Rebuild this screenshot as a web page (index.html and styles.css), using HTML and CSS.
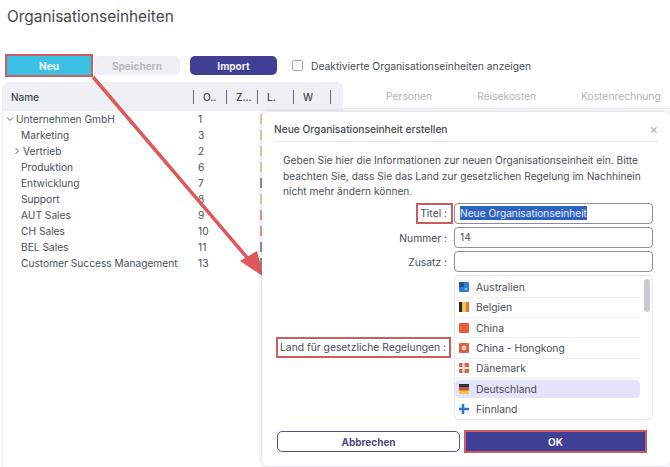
FILE: index.html
```html
<!DOCTYPE html>
<html lang="de">
<head>
<meta charset="utf-8">
<title>Organisationseinheiten</title>
<link rel="stylesheet" href="styles.css">
</head>
<body>
<div class="page">
  <h1 class="title">Organisationseinheiten</h1>
  <div class="toolbar">
    <button class="btn btn-new">Neu</button>
    <button class="btn btn-save">Speichern</button>
    <span class="sep"></span>
    <button class="btn btn-import">Import</button>
    <label class="check"><span class="box"></span>Deaktivierte Organisationseinheiten anzeigen</label>
  </div>
  <div class="main">
    <div class="table">
      <div class="thead">
        <span class="th th-name">Name</span>
        <span class="th th-o">O..</span>
        <span class="th th-z">Z...</span>
        <span class="th th-l">L.</span>
        <span class="th th-w">W</span>
        <span class="th th-x"></span>
      </div>
      <div class="tbody">
        <div class="row"><span class="name lvl0"><svg class="chev" viewBox="0 0 8 8"><path d="M1 2.5 4 5.5 7 2.5"/></svg>Unternehmen GmbH</span><span class="num">1</span><span class="cut cut-a"></span></div>
        <div class="row"><span class="name lvl1">Marketing</span><span class="num">3</span><span class="cut cut-a"></span></div>
        <div class="row"><span class="name lvl2"><svg class="chev" viewBox="0 0 8 8"><path d="M2.5 1 5.5 4 2.5 7"/></svg>Vertrieb</span><span class="num">2</span><span class="cut cut-a"></span></div>
        <div class="row"><span class="name lvl1">Produktion</span><span class="num">6</span><span class="cut cut-a"></span></div>
        <div class="row"><span class="name lvl1">Entwicklung</span><span class="num">7</span><span class="cut cut-b"></span></div>
        <div class="row"><span class="name lvl1">Support</span><span class="num">8</span><span class="cut cut-a"></span></div>
        <div class="row"><span class="name lvl1">AUT Sales</span><span class="num">9</span><span class="cut cut-c"></span></div>
        <div class="row"><span class="name lvl1">CH Sales</span><span class="num">10</span><span class="cut cut-c"></span></div>
        <div class="row"><span class="name lvl1">BEL Sales</span><span class="num">11</span><span class="cut cut-b"></span></div>
        <div class="row"><span class="name lvl1">Customer Success Management</span><span class="num">13</span><span class="cut cut-b"></span></div>
      </div>
    </div>
    <div class="tabs">
      <span>Personen</span><span>Reisekosten</span><span>Kostenrechnung</span>
    </div>
  </div>

  <svg class="arrow" viewBox="0 0 670 467" width="670" height="467">
    <path class="arrow-line" d="M93 77 250 261"/>
    <path class="arrow-head" d="M264 277 240 261 257 251Z"/>
  </svg>

  <div class="dialog">
    <div class="dlg-head"><span>Neue Organisationseinheit erstellen</span><span class="close">×</span></div>
    <p class="intro">Geben Sie hier die Informationen zur neuen Organisationseinheit ein. Bitte beachten Sie, dass Sie das Land zur gesetzlichen Regelung im Nachhinein nicht mehr ändern können.</p>
    <div class="form">
      <div class="field"><span class="lab mark mark-title">Titel :</span><div class="input"><span class="sel">Neue Organisationseinheit</span></div></div>
      <div class="field"><span class="lab">Nummer :</span><div class="input">14</div></div>
      <div class="field"><span class="lab">Zusatz :</span><div class="input"></div></div>
      <div class="field field-list">
        <span class="lab mark">Land für gesetzliche Regelungen :</span>
        <div class="list">
          <div class="scroll"></div>
          <div class="opt"><svg class="flag" viewBox="0 0 10 10"><rect width="10" height="10" rx="1" fill="#2f7fd0"/><rect width="5" height="5" fill="#24508f"/><circle cx="7" cy="7" r="1" fill="#cfe2f5"/></svg>Australien</div>
          <div class="opt"><svg class="flag" viewBox="0 0 10 10"><rect width="3.4" height="10" fill="#2b2b2b"/><rect x="3.4" width="3.3" height="10" fill="#f3cf3f"/><rect x="6.7" width="3.3" height="10" fill="#e2763f"/></svg>Belgien</div>
          <div class="opt"><svg class="flag" viewBox="0 0 10 10"><rect width="10" height="10" rx="1" fill="#ee5b35"/></svg>China</div>
          <div class="opt"><svg class="flag" viewBox="0 0 10 10"><rect width="10" height="10" rx="1" fill="#e0603f"/><circle cx="5" cy="5" r="2.4" fill="#f6c9b8"/></svg>China - Hongkong</div>
          <div class="opt"><svg class="flag" viewBox="0 0 10 10"><rect width="10" height="10" rx="1" fill="#d9634a"/><rect x="3.6" width="2" height="10" fill="#f5ece8"/><rect y="4" width="10" height="2" fill="#f5ece8"/></svg>Dänemark</div>
          <div class="opt opt-on"><svg class="flag" viewBox="0 0 10 10"><rect width="10" height="3.6" fill="#333"/><rect y="3.6" width="10" height="3.2" fill="#d0553a"/><rect y="6.8" width="10" height="3.2" fill="#f2c53c"/></svg>Deutschland</div>
          <div class="opt"><svg class="flag" viewBox="0 0 10 10"><rect width="10" height="10" fill="#f3f6fa"/><rect x="2.8" width="2.4" height="10" fill="#2b7cc4"/><rect y="3.8" width="10" height="2.4" fill="#2b7cc4"/></svg>Finnland</div>
        </div>
      </div>
    </div>
    <div class="actions">
      <button class="btn btn-cancel">Abbrechen</button>
      <button class="btn btn-ok">OK</button>
    </div>
  </div>
</div>
</body>
</html>
```
FILE: styles.css
```css
* { box-sizing: border-box; }
html, body { margin: 0; padding: 0; }
body { width: 670px; height: 467px; overflow: hidden; background: #fff; font-family: Inter, "Liberation Sans", sans-serif; color: #44474d; }
.page { position: relative; width: 670px; height: 467px; overflow: hidden; }
.title { margin: 0; padding: 7px 0 0 7px; height: 54px; font-size: 15.4px; line-height: 20px; font-weight: 400; color: #45484d; }
.toolbar { display: flex; align-items: center; height: 23px; padding-left: 5px; }
.btn { border: 0; font-family: inherit; font-size: 10px; font-weight: 700; padding: 0; }
.btn-new { width: 88px; height: 23px; background: #3cc0e4; color: #f4fbfe; outline: 2px solid #cf5b5e; outline-offset: -2px; }
.btn-save { width: 86px; height: 19px; margin-left: 1px; background: #eef0f5; color: #b5b8c0; border-radius: 5px; }
.sep { width: 1px; height: 19px; margin: 0 4px 0 5px; background: #eceef2; }
.btn-import { width: 87px; height: 19px; background: #3f3f94; color: #f1f1fa; border-radius: 5px; }
.check { display: flex; align-items: center; margin-left: 15px; font-size: 10.3px; color: #4a4d53; }
.box { width: 11px; height: 11px; margin-right: 8px; border: 1px solid #a9acb3; border-radius: 2px; background: #fff; }
.main { display: flex; margin-top: 5px; }
.table { width: 341px; height: 385px; margin-left: 2px; flex: none; border-left: 1px solid #eceef2; border-radius: 6px 6px 0 0; }
.thead { display: flex; align-items: center; height: 29px; padding-top: 1px; background: #eef0f4; border-radius: 6px 6px 0 0; font-size: 10px; font-weight: 500; color: #43464c; }
.th { height: 14px; line-height: 14px; border-left: 1px solid #666a72; padding-left: 9px; white-space: nowrap; }
.th-name { width: 190px; border-left: 0; padding-left: 8px; }
.th-o { width: 33px; }
.th-z { width: 31px; padding-left: 9px; }
.th-l { width: 36px; padding-left: 9px; }
.th-w { width: 37px; }
.th-x { flex: 1; }
.tbody { font-size: 10.2px; color: #4b4e54; }
.row { display: flex; align-items: center; height: 16px; line-height: 16px; }
.name { width: 195px; display: flex; align-items: center; white-space: nowrap; }
.num { width: 62px; }
.cut { width: 2px; height: 10px; }
.cut-a { background: #e8d3b8; }
.cut-b { background: #8d9098; }
.cut-c { background: #d9a08c; }
.lvl0 { padding-left: 3px; }
.lvl1 { padding-left: 18px; }
.lvl2 { padding-left: 10px; }
.chev { width: 8px; height: 8px; margin-right: 2px; flex: none; fill: none; stroke: #55585e; stroke-width: 1; }
.tabs { display: flex; flex: 1; padding: 8px 0 0 43px; height: 27px; border-bottom: 1px solid #eceef2; font-size: 10.3px; line-height: 12px; color: #b0b3b9; gap: 45px; align-items: flex-start; }
.arrow { position: absolute; left: 0; top: 0; pointer-events: none; }
.arrow-line { stroke: #dd5a5c; stroke-width: 3.5; fill: none; }
.arrow-head { fill: #dd5a5c; }
.dialog { position: absolute; left: 262px; top: 112px; width: 408px; height: 354px; background: #fff; border-radius: 6px; box-shadow: 0 0 5px rgba(60,65,80,.28); padding: 0 12px; }
.dlg-head { display: flex; justify-content: space-between; align-items: center; height: 30px; padding-top: 5px; margin-bottom: 11px; border-bottom: 1px solid #e6e8ec; font-size: 10.2px; font-weight: 500; color: #45484e; }
.close { font-size: 13px; font-weight: 400; color: #a9acb2; }
.intro { margin: 0 0 0 9px; width: 365px; font-size: 10.2px; line-height: 15.5px; color: #4b4e54; }
.form { display: flex; flex-direction: column; gap: 3px; margin-top: 3.5px; }
.field { display: flex; align-items: center; justify-content: flex-end; }
.lab { font-size: 10.3px; color: #4b4e54; margin-right: 3px; padding: 0 4px 0 3px; white-space: nowrap; }
.mark { outline: 2px solid #cf5b5e; outline-offset: -2px; height: 21px; line-height: 21px; padding: 0 5px 0 4px; }
.mark-title { margin-right: 1px; padding: 0 6px 0 4px; }
.input { width: 199px; height: 21px; border: 1px solid #8b8e9b; border-radius: 4px; padding: 0 5px; line-height: 19px; font-size: 10.3px; color: #4b4e54; background: #fff; margin-right: 5px; }
.sel { background: #2f62c0; color: #e8effa; display: inline-block; font-size: 10.2px; line-height: 14px; }
.field-list { height: 145px; }
.list { position: relative; width: 199px; height: 145px; margin-right: 5px; padding-top: 1.5px; border: 1px solid #e8e9ee; border-radius: 5px; font-size: 10.3px; color: #4b4e54; }
.scroll { position: absolute; right: 2px; top: 3px; width: 6px; height: 33px; border-radius: 3px; background: #c9cbd0; }
.opt { display: flex; align-items: center; height: 20.25px; margin-right: 12px; padding-left: 4px; border-bottom: 1px solid #f1f2f4; }
.opt-on { background: #e3e3fb; background-clip: padding-box; border-top: 1px solid transparent; border-bottom: 1px solid transparent; border-radius: 5px; }
.opt:last-of-type { border-bottom: 0; }
.flag { width: 10px; height: 10px; margin-right: 7px; flex: none; }
.actions { display: flex; gap: 5px; margin-top: 11px; padding-left: 3px; }
.btn-cancel { width: 183px; height: 21px; background: #fff; border: 1px solid #53557f; border-radius: 5px; color: #4a4c80; }
.btn-ok { width: 181px; height: 21px; background: #3f3f94; color: #f4f4fb; outline: 2px solid #cf5b5e; outline-offset: -1px; }
```
